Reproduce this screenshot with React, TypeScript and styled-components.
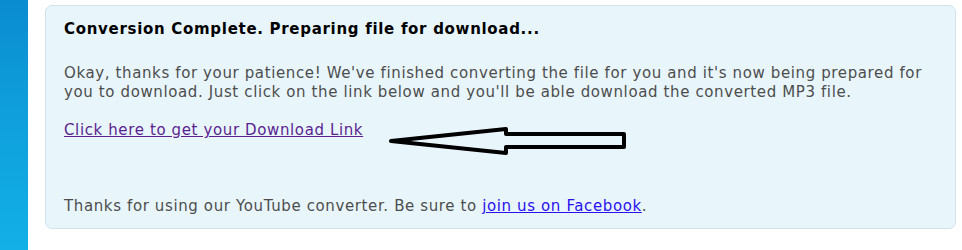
import React from "react";
import styled, { createGlobalStyle } from "styled-components";

const Global = createGlobalStyle`
  html, body { margin: 0; padding: 0; background: #ffffff; }
  body { font-family: "DejaVu Sans", Verdana, sans-serif; }
`;

const Page = styled.div`
  display: flex;
  align-items: flex-start;
  height: 250px;
  overflow: hidden;
`;

const SideStrip = styled.div`
  width: 28px;
  height: 250px;
  flex: none;
  background: linear-gradient(180deg, #0a8cd0 0%, #0f9fdc 45%, #12b0e6 100%);
`;

const Panel = styled.section`
  margin: 5px 0 0 17px;
  width: 911px;
  box-sizing: border-box;
  background: #e8f6fc;
  border: 1px solid #cfe2ee;
  border-radius: 7px;
  padding: 14px 18px 12px 18px;
  font-size: 15px;
  line-height: 19px;
  letter-spacing: 0.62px;
  color: #4d4d4d;
`;

const Title = styled.h3`
  margin: 0 0 25px 0;
  font-size: 15px;
  line-height: 19px;
  letter-spacing: 0.7px;
  font-weight: bold;
  color: #000;
`;

const Para = styled.p<{ $gap?: number }>`
  margin: 0 0 ${(p) => p.$gap ?? 19}px 0;
`;

const LinkRow = styled.div`
  display: flex;
  align-items: flex-start;
  margin-bottom: 40px;
`;

const TextLink = styled.a<{ $visited?: boolean }>`
  color: ${(p) => (p.$visited ? "#5b1f8f" : "#2a10ee")};
  text-decoration: underline;
`;

const Arrow = styled.svg`
  flex: none;
  margin-top: 4px;
  margin-left: 24px;
`;

function ArrowMark() {
  return (
    <Arrow width="244" height="32" viewBox="0 0 244 32">
      <polygon
        points="4,16 119,4 119,9 237,9 237,22 119,22 119,28"
        fill="none"
        stroke="#000"
        strokeWidth="4"
        strokeLinejoin="round"
      />
    </Arrow>
  );
}

export default function App() {
  return (
    <>
      <Global />
      <Page>
        <SideStrip />
        <Panel>
          <Title>Conversion Complete. Preparing file for download...</Title>
          <Para>
            Okay, thanks for your patience! We've finished converting the file for you and it's now being prepared for
            you to download. Just click on the link below and you'll be able download the converted MP3 file.
          </Para>
          <LinkRow>
            <TextLink $visited href="#">
              Click here to get your Download Link
            </TextLink>
            <ArrowMark />
          </LinkRow>
          <Para $gap={0}>
            Thanks for using our YouTube converter. Be sure to <TextLink href="#">join us on Facebook</TextLink>.
          </Para>
        </Panel>
      </Page>
    </>
  );
}
